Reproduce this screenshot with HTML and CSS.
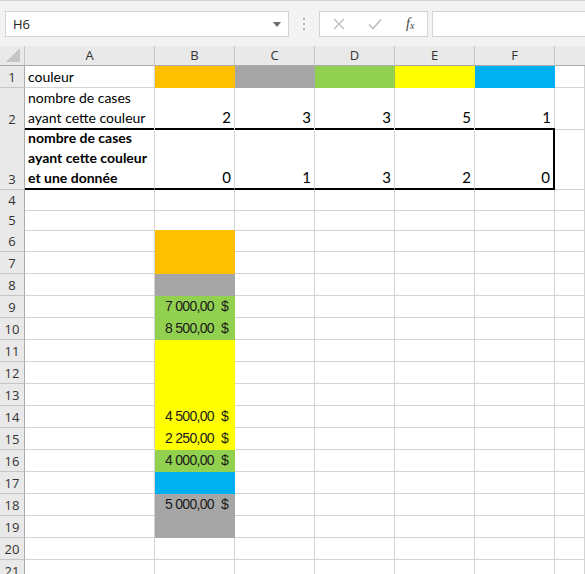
FILE: index.html
```html
<!DOCTYPE html>
<html lang="fr">
<head>
    <meta charset="UTF-8">
    <title>Classeur</title>
    <link rel="stylesheet" href="styles.css">
</head>
<body>
    <div class="toolbar">
        <div class="namebox">
            <span>H6</span>
            <svg class="caret" width="8" height="5" viewBox="0 0 8 5"><path d="M0 0h8L4 5z" fill="#6b6b6b"/></svg>
        </div>
        <div class="grip"><i></i><i></i><i></i></div>
        <div class="fxbox">
            <svg width="12" height="12" viewBox="0 0 12 12"><path d="M1 1l10 10M11 1L1 11" stroke="#bdbdbd" stroke-width="1.4"/></svg>
            <svg width="14" height="12" viewBox="0 0 14 12"><path d="M1 6.5l4 4L13 1.5" stroke="#bdbdbd" stroke-width="1.6" fill="none"/></svg>
            <span class="fx">f<sub>x</sub></span>
        </div>
        <div class="formula"></div>
    </div>

    <div class="sheet">
        <div class="row head">
            <div class="corner"><svg width="14" height="14" viewBox="0 0 14 14"><path d="M14 0v14H0z" fill="#c4c4c4"/></svg></div>
            <div>A</div><div>B</div><div>C</div><div>D</div><div>E</div><div>F</div><div></div>
        </div>

        <div class="row r1">
            <div class="num">1</div>
            <div class="txt">couleur</div>
            <div class="orange"></div><div class="gray"></div><div class="green"></div><div class="yellow"></div><div class="blue"></div><div></div>
        </div>
        <div class="row r2">
            <div class="num">2</div>
            <div class="txt">nombre de cases<br>ayant cette couleur</div>
            <div class="val">2</div><div class="val">3</div><div class="val">3</div><div class="val">5</div><div class="val">1</div><div></div>
        </div>
        <div class="row r3">
            <div class="num">3</div>
            <div class="txt bold box">nombre de cases<br>ayant cette couleur<br>et une donnée</div>
            <div class="val box">0</div><div class="val box">1</div><div class="val box">3</div><div class="val box">2</div><div class="val box last">0</div><div></div>
        </div>

        <div class="row small"><div class="num">4</div><div></div><div></div><div></div><div></div><div></div><div></div><div></div></div>
        <div class="row small"><div class="num">5</div><div></div><div></div><div></div><div></div><div></div><div></div><div></div></div>
        <div class="row"><div class="num">6</div><div></div><div class="orange"></div><div></div><div></div><div></div><div></div><div></div></div>
        <div class="row"><div class="num">7</div><div></div><div class="orange"></div><div></div><div></div><div></div><div></div><div></div></div>
        <div class="row"><div class="num">8</div><div></div><div class="gray"></div><div></div><div></div><div></div><div></div><div></div></div>
        <div class="row"><div class="num">9</div><div></div><div class="green money"><span>7 000,00</span><span>$</span></div><div></div><div></div><div></div><div></div><div></div></div>
        <div class="row"><div class="num">10</div><div></div><div class="green money"><span>8 500,00</span><span>$</span></div><div></div><div></div><div></div><div></div><div></div></div>
        <div class="row"><div class="num">11</div><div></div><div class="yellow"></div><div></div><div></div><div></div><div></div><div></div></div>
        <div class="row"><div class="num">12</div><div></div><div class="yellow"></div><div></div><div></div><div></div><div></div><div></div></div>
        <div class="row"><div class="num">13</div><div></div><div class="yellow"></div><div></div><div></div><div></div><div></div><div></div></div>
        <div class="row"><div class="num">14</div><div></div><div class="yellow money"><span>4 500,00</span><span>$</span></div><div></div><div></div><div></div><div></div><div></div></div>
        <div class="row"><div class="num">15</div><div></div><div class="yellow money"><span>2 250,00</span><span>$</span></div><div></div><div></div><div></div><div></div><div></div></div>
        <div class="row"><div class="num">16</div><div></div><div class="green money"><span>4 000,00</span><span>$</span></div><div></div><div></div><div></div><div></div><div></div></div>
        <div class="row"><div class="num">17</div><div></div><div class="blue"></div><div></div><div></div><div></div><div></div><div></div></div>
        <div class="row"><div class="num">18</div><div></div><div class="gray money"><span>5 000,00</span><span>$</span></div><div></div><div></div><div></div><div></div><div></div></div>
        <div class="row"><div class="num">19</div><div></div><div class="gray"></div><div></div><div></div><div></div><div></div><div></div></div>
        <div class="row"><div class="num">20</div><div></div><div></div><div></div><div></div><div></div><div></div><div></div></div>
        <div class="row"><div class="num">21</div><div></div><div></div><div></div><div></div><div></div><div></div><div></div></div>
    </div>
</body>
</html>
```
FILE: styles.css
```css
* {
    box-sizing: border-box;
}
body {
    margin: 0;
    background: #ffffff;
    font-family: Lato, "Liberation Sans", sans-serif;
    overflow: hidden;
}

/* formula bar */
.toolbar {
    height: 46px;
    background: #f3f3f3;
    border-top: 1px solid #d6d6d6;
    display: flex;
    align-items: flex-start;
    padding: 10px 0 0 5px;
}
.namebox {
    width: 284px;
    height: 26px;
    background: #fff;
    border: 1px solid #d4d4d4;
    display: flex;
    align-items: center;
    justify-content: space-between;
    padding: 0 7px 0 7px;
    font-family: "Open Sans", sans-serif;
    font-size: 13px;
    color: #222;
}
.grip {
    width: 30px;
    height: 26px;
    display: flex;
    flex-direction: column;
    align-items: center;
    justify-content: center;
    gap: 3px;
}
.grip i {
    width: 2px;
    height: 2px;
    background: #b0b0b0;
}
.fxbox {
    width: 109px;
    height: 26px;
    background: #fff;
    border: 1px solid #d4d4d4;
    display: flex;
    align-items: center;
    padding-left: 13px;
    gap: 23px;
}
.fx {
    font-family: "Liberation Serif", serif;
    font-style: italic;
    font-size: 14px;
    color: #444;
    margin-left: 1px;
}
.fx sub {
    font-size: 10px;
    vertical-align: -1px;
}
.formula {
    flex: 1;
    height: 26px;
    margin-left: 4px;
    background: #fff;
    border: 1px solid #d4d4d4;
    border-right: none;
}

/* grid */
.row {
    display: grid;
    grid-template-columns: 25px 130px repeat(5, 80px) 1fr;
    height: 22px;
}
.row > div {
    border-right: 1px solid #d4d4d4;
    border-bottom: 1px solid #d4d4d4;
    font-size: 14px;
    line-height: 20px;
    color: #000;
    white-space: nowrap;
}
.row.small {
    height: 20px;
}
.row.r2 {
    height: 40px;
}
.row.r3 {
    height: 62px;
}

.row.head {
    height: 20px;
}
.row.head > div {
    background: #e9e9e9;
    border-right-color: #c6c6c6;
    border-bottom: 1px solid #ababab;
    text-align: center;
    font-family: "Open Sans", sans-serif;
    font-size: 13px;
    line-height: 19px;
    color: #333;
}
.row.head > div:last-child {
    border-right: none;
}
.row.head .corner {
    display: flex;
    align-items: flex-end;
    justify-content: flex-end;
    padding: 0 4px 3px 0;
}

.row > .num {
    background: #e9e9e9;
    border-right: 1px solid #ababab;
    border-bottom-color: #c6c6c6;
    font-family: "Open Sans", sans-serif;
    font-size: 13px;
    color: #333;
    display: flex;
    align-items: flex-end;
    justify-content: center;
    line-height: 20px;
}

.txt {
    padding: 0 3px 0 3px;
    display: flex;
    align-items: flex-end;
}
.bold {
    font-weight: bold;
}
.val {
    text-align: right;
    padding: 0 3px 1px 0;
    display: flex;
    align-items: flex-end;
    justify-content: flex-end;
    font-size: 15px !important;
}

/* bordered block A3:F3 */
.row.r2 > div:not(.num):not(:last-child) {
    border-bottom: 2px solid #000;
}
.box {
    border-bottom: 2px solid #000 !important;
}
.box.last {
    border-right: 2px solid #000 !important;
}

.money {
    display: flex;
    align-items: flex-end;
    justify-content: flex-end;
    padding: 0 6px 1px 0;
    font-family: "Liberation Sans", sans-serif;
    font-size: 14px !important;
    letter-spacing: -0.7px;
    color: #1a1a1a !important;
}
.money span + span {
    margin-left: 7px;
}

.orange { background: #ffc000; border-color: #ffc000 !important; }
.gray { background: #a6a6a6; border-color: #a6a6a6 !important; }
.green { background: #92d050; border-color: #92d050 !important; }
.yellow { background: #ffff00; border-color: #ffff00 !important; }
.blue { background: #00b0f0; border-color: #00b0f0 !important; }
```
